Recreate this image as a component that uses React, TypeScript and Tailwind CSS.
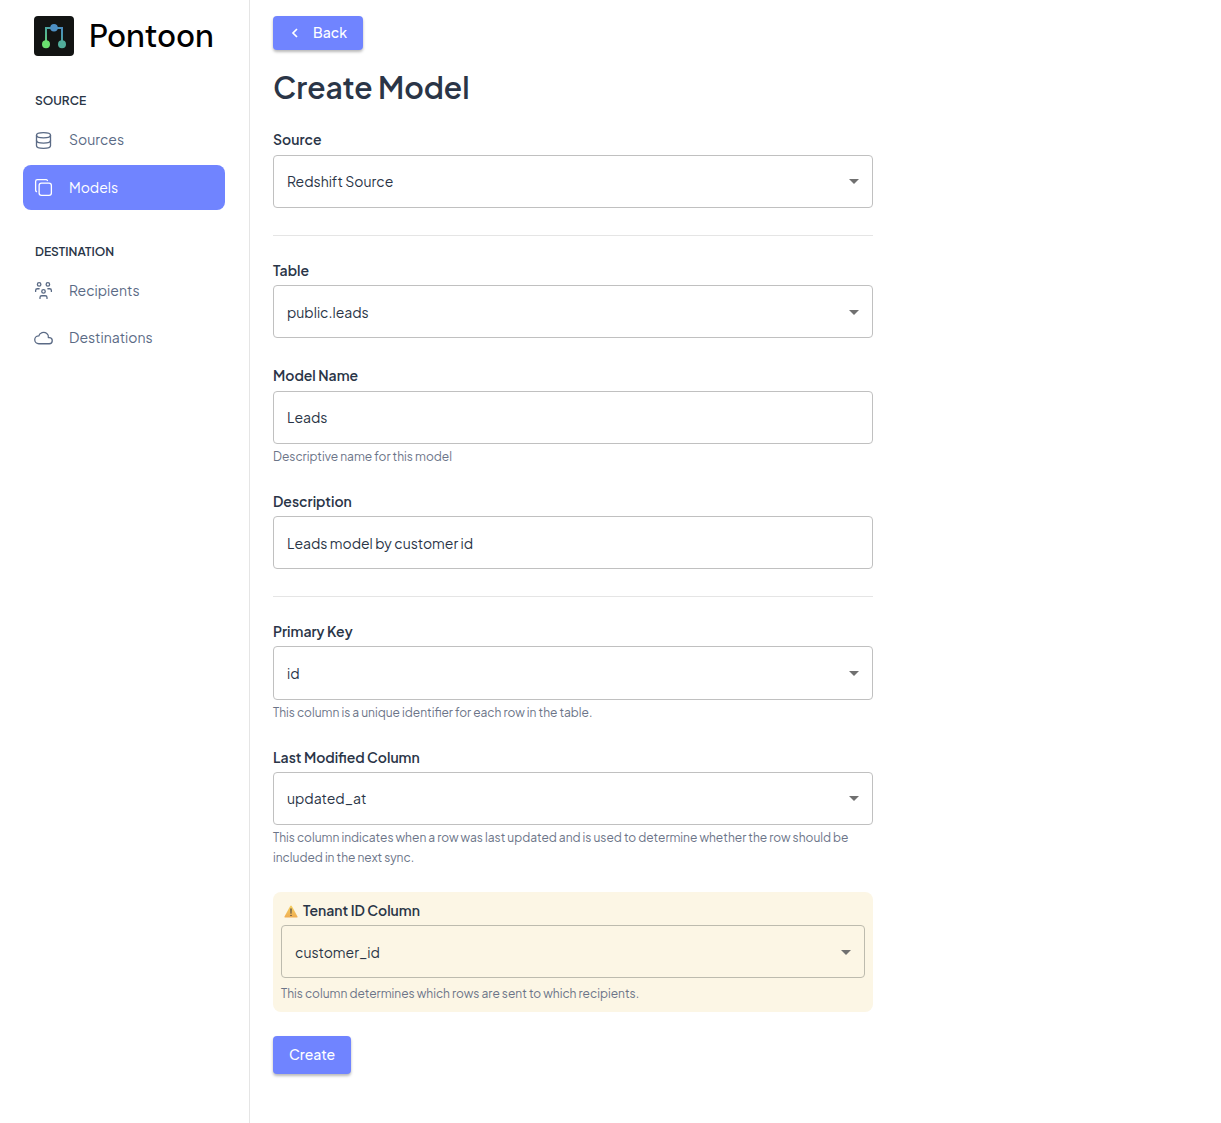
import type { ReactNode } from "react";

function NavIcon({ children, className = "" }: { children: ReactNode; className?: string }) {
  return (
    <svg width="21" height="21" viewBox="0 0 24 24" fill="none" stroke="currentColor" strokeWidth="1.5" strokeLinecap="round" strokeLinejoin="round" className={`shrink-0 ${className}`}>
      {children}
    </svg>
  );
}

function NavItem({ label, icon, active, className = "", iconClass = "" }: { label: string; icon: ReactNode; active?: boolean; className?: string; iconClass?: string }) {
  return (
    <a className={`flex h-[45px] items-center gap-[15px] rounded-lg pl-[10px] text-[14px] ${active ? "bg-[#7084ff] text-white" : "text-[#5a6a85]"} ${className}`}>
      <NavIcon className={iconClass}>{icon}</NavIcon>
      <span>{label}</span>
    </a>
  );
}

function Label({ children, className = "" }: { children: ReactNode; className?: string }) {
  return <label className={`flex h-[29px] items-center text-[14px] font-semibold text-[#2a3547] ${className}`}>{children}</label>;
}

function Box({ value, select, className = "h-[53px]", tint }: { value: string; select?: boolean; className?: string; tint?: boolean }) {
  return (
    <div className={`flex items-center justify-between rounded-[4px] border pr-[13px] pl-[13px] text-[14px] text-[#2a3547] ${tint ? "border-[#bdbbae]" : "border-[#c0c0c0]"} ${className}`}>
      <span>{value}</span>
      {select && (
        <svg width="10" height="5" viewBox="0 0 10 5" className="shrink-0">
          <path d="M0 0h10L5 5z" fill="#707070" />
        </svg>
      )}
    </div>
  );
}

function Helper({ children, className = "" }: { children: ReactNode; className?: string }) {
  return <p className={`text-[12px] leading-5 whitespace-nowrap text-[#6b7488] ${className}`}>{children}</p>;
}

export default function App() {
  return (
    <div className="flex h-[1123px] w-full overflow-hidden bg-white font-['Plus_Jakarta_Sans',Inter,sans-serif]">
      <aside className="w-[250px] shrink-0 border-r border-[#e5e5e5] pr-6 pl-[23px]">
        <div className="mt-4 ml-[11px] flex h-10 items-center gap-[15px]">
          <svg width="40" height="40" viewBox="0 0 40 40" className="shrink-0">
            <defs>
              <linearGradient id="pier" x1="8" y1="31" x2="29" y2="9" gradientUnits="userSpaceOnUse">
                <stop offset="0" stopColor="#70e66c" />
                <stop offset="0.55" stopColor="#4ba59c" />
                <stop offset="1" stopColor="#4b86c8" />
              </linearGradient>
            </defs>
            <rect width="40" height="40" rx="4" fill="#121413" />
            <path d="M12 28V12H28V28" fill="none" stroke="url(#pier)" strokeWidth="2" />
            <circle cx="20" cy="11.8" r="3.8" fill="#4d8fc4" />
            <circle cx="12" cy="28.2" r="4" fill="#6be070" />
            <circle cx="28" cy="28.2" r="4" fill="#51ad9b" />
          </svg>
          <span className="font-['DM_Sans','Plus_Jakarta_Sans',Inter,sans-serif] text-[32px] leading-10 font-medium tracking-[-0.15px] text-black">Pontoon</span>
        </div>

        <h2 className="mt-9 ml-3 h-[18px] text-[12px] leading-[18px] font-semibold text-[#2a3547]">SOURCE</h2>
        <NavItem
          className="mt-[7px]"
          iconClass="mt-px"
          label="Sources"
          icon={<><ellipse cx="12" cy="6" rx="8" ry="3" /><path d="M4 6v6a8 3 0 0 0 16 0V6" /><path d="M4 12v6a8 3 0 0 0 16 0v-6" /></>}
        />
        <NavItem
          active
          className="mt-[3px]"
          label="Models"
          icon={<><path d="M7 9.667A2.667 2.667 0 0 1 9.667 7h8.666A2.667 2.667 0 0 1 21 9.667v8.666A2.667 2.667 0 0 1 18.333 21H9.667A2.667 2.667 0 0 1 7 18.333z" /><path d="M4.012 16.737A2 2 0 0 1 3 15V5c0-1.1.9-2 2-2h10c.75 0 1.158.385 1.5 1" /></>}
        />

        <h2 className="mt-[33px] ml-3 h-[18px] text-[12px] leading-[18px] font-semibold text-[#2a3547]">DESTINATION</h2>
        <NavItem
          className="mt-[7px]"
          label="Recipients"
          icon={<><path d="M10 13a2 2 0 1 0 4 0a2 2 0 0 0-4 0" /><path d="M8 21v-1a2 2 0 0 1 2-2h4a2 2 0 0 1 2 2v1" /><path d="M15 5a2 2 0 1 0 4 0a2 2 0 0 0-4 0" /><path d="M17 10h2a2 2 0 0 1 2 2v1" /><path d="M5 5a2 2 0 1 0 4 0a2 2 0 0 0-4 0" /><path d="M3 13v-1a2 2 0 0 1 2-2h2" /></>}
        />
        <NavItem
          className="mt-[2px]"
          iconClass="mt-px"
          label="Destinations"
          icon={<path d="M6.657 18C4.085 18 2 15.993 2 13.517s2.085-4.482 4.657-4.482c.393-1.762 1.794-3.2 3.675-3.773 1.88-.572 3.956-.193 5.444 1 1.488 1.19 2.162 3.007 1.77 4.769h.99c1.913 0 3.464 1.56 3.464 3.486 0 1.927-1.551 3.487-3.465 3.487H6.657" />}
        />
      </aside>

      <main className="ml-[23px] w-[600px] shrink-0 pt-4">
        <button className="flex h-[33.5px] w-[90px] items-center rounded-[4px] bg-[#7084ff] pb-px pl-[17px] text-[14px] font-medium text-white shadow-[0_2px_3px_rgba(0,0,0,0.28)]">
          <svg width="10" height="12" viewBox="0 0 10 12" fill="none" stroke="currentColor" strokeWidth="1.7" className="mt-px mr-[13px]">
            <path d="M7 2L3 6l4 4" />
          </svg>
          Back
        </button>
        <h1 className="mt-[17.5px] h-10 text-[30px] leading-10 font-semibold whitespace-nowrap text-[#2a3547]">Create Model</h1>

        <Label className="mt-[19px] pb-[2px]">Source</Label>
        <Box select value="Redshift Source" />
        <hr className="mt-[27px] border-[#e5e5e5]" />

        <Label className="mt-5">Table</Label>
        <Box select value="public.leads" className="h-[53px] pt-[2px]" />

        <Label className="mt-6 pb-[2px]">Model Name</Label>
        <Box value="Leads" />
        <Helper className="mt-[3px]">Descriptive name for this model</Helper>

        <Label className="mt-5">Description</Label>
        <Box value="Leads model by customer id" className="h-[53px] pt-[2px]" />
        <hr className="mt-[27px] border-[#e5e5e5]" />

        <Label className="mt-5">Primary Key</Label>
        <Box select value="id" className="h-[54px] pt-px" />
        <Helper className="mt-[3px]">This column is a unique identifier for each row in the table.</Helper>

        <Label className="mt-5">Last Modified Column</Label>
        <Box select value="updated_at" />
        <Helper className="mt-[3px]">
          This column indicates when a row was last updated and is used to determine whether the row should be
          <br />
          included in the next sync.
        </Helper>

        <section className="mt-6 h-[120px] rounded-lg bg-[#fcf6e5] px-2 pt-1">
          <Label>
            <svg width="14" height="13" viewBox="0 0 14 13" className="mt-px mr-[5px] ml-[3px]">
              <defs>
                <linearGradient id="warn" x1="0" y1="0" x2="0" y2="1">
                  <stop offset="0" stopColor="#f5cf60" />
                  <stop offset="1" stopColor="#efad52" />
                </linearGradient>
              </defs>
              <path d="M6.2.9Q7 .1 7.8.9L13.6 11.8Q13.8 12.6 13 12.6H1Q.2 12.6.4 11.8Z" fill="url(#warn)" />
              <path d="M6.4 3.6h1.2l-.2 5.2h-.8z" fill="#3d3d45" />
              <circle cx="7" cy="10.4" r=".7" fill="#3d3d45" />
            </svg>
            <span>Tenant ID Column</span>
          </Label>
          <Box select tint value="customer_id" className="h-[53px] pt-[2px]" />
          <Helper className="mt-[6px]">This column determines which rows are sent to which recipients.</Helper>
        </section>

        <button className="mt-6 flex h-[37.5px] w-[78px] items-center justify-center rounded-[4px] bg-[#7084ff] pb-px text-[14px] font-medium text-white shadow-[0_2px_3px_rgba(0,0,0,0.28)]">
          Create
        </button>
      </main>
    </div>
  );
}
